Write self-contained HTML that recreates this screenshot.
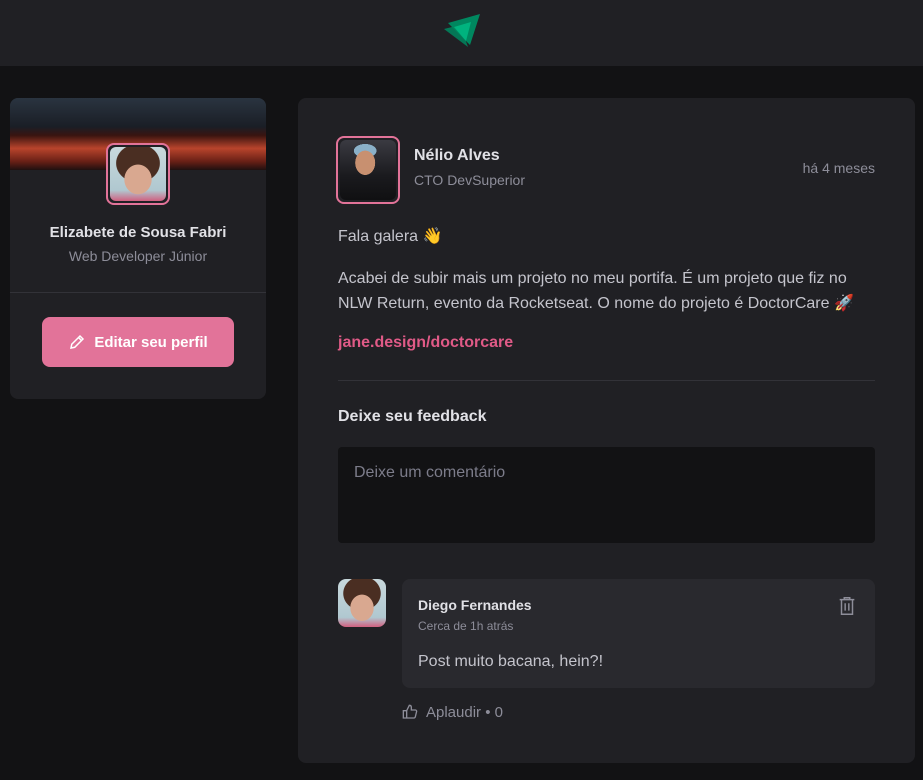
<!DOCTYPE html>
<html><head><meta charset="utf-8"><style>
*{margin:0;padding:0;box-sizing:border-box}
body{width:923px;height:780px;background:#121214;font-family:"Liberation Sans",sans-serif;color:#e1e1e6;overflow:hidden;position:relative}
.hdr{position:absolute;left:0;top:0;width:923px;height:66px;background:#202024}
.side{position:absolute;left:10px;top:98px;width:256px;height:301px;background:#202024;border-radius:8px;overflow:hidden}
.cover{height:72px;background:linear-gradient(180deg,#2a3440 0%,#1a1e26 40%,#3a1410 52%,#b8442c 70%,#6a2016 88%,#201010 100%)}
.av{position:absolute;border:2px solid #e27399;border-radius:8px;background:#202024;padding:2px}
.av div{width:100%;height:100%;border-radius:6px}
.face{background:radial-gradient(ellipse 40% 45% at 50% 60%,#d9a890 0 60%,rgba(0,0,0,0) 62%),radial-gradient(ellipse 55% 50% at 50% 30%,#4a2e22 0 70%,rgba(0,0,0,0) 72%),linear-gradient(180deg,#c8d8dc 0%,#b0c8d0 80%,#d06080 100%)}
.man{background:radial-gradient(ellipse 22% 25% at 45% 38%,#c89070 0 80%,rgba(0,0,0,0) 82%),radial-gradient(ellipse 25% 14% at 45% 18%,#8ab0c8 0 80%,rgba(0,0,0,0) 82%),linear-gradient(180deg,#3a3a42 0%,#1a1a1e 60%,#101012 100%)}
.post{position:absolute;left:298px;top:98px;width:617px;height:665px;background:#202024;border-radius:8px}
.t{position:absolute;white-space:nowrap}
</style></head><body>
<div class="hdr">
<svg style="position:absolute;left:444px;top:13px" width="38" height="34" viewBox="0 0 38 34"><polygon points="4,10 36,1 26,32" fill="#00875f"/><polygon points="0,16 16,12 24,34" fill="#00875f" opacity=".85"/><polygon points="10,14 27,9 22,28" fill="#00b37e"/></svg>
</div>
<div class="side"><div class="cover"></div>
<div class="av" style="left:96px;top:45px;width:64px;height:62px"><div class="face"></div></div>
<div class="t" style="left:0;width:256px;text-align:center;top:126px;font-weight:bold;font-size:15px;color:#e1e1e6">Elizabete de Sousa Fabri</div>
<div class="t" style="left:0;width:256px;text-align:center;top:150px;font-size:14px;color:#8d8d99">Web Developer Júnior</div>
<div style="position:absolute;left:0;top:194px;width:256px;height:1px;background:#323238"></div>
<div style="position:absolute;left:32px;top:219px;width:192px;height:50px;background:#e27399;border-radius:8px;color:#fff;font-weight:bold;font-size:15px;display:flex;align-items:center;justify-content:center;gap:8px">
<svg width="18" height="18" viewBox="0 0 24 24" fill="none" stroke="#fff" stroke-width="2"><path d="M4 20l1-5L16 4l4 4L9 19z M14 6l4 4"/></svg>Editar seu perfil</div>
</div>
<div class="post">
<div class="av" style="left:38px;top:38px;width:64px;height:68px"><div class="man"></div></div>
<div class="t" style="left:116px;top:49px;font-weight:bold;font-size:16px">Nélio Alves</div>
<div class="t" style="left:116px;top:74px;font-size:14px;color:#8d8d99">CTO DevSuperior</div>
<div class="t" style="right:40px;top:62px;font-size:14px;color:#8d8d99">há 4 meses</div>
<div class="t" style="left:40px;top:128px;font-size:16px;color:#c4c4cc">Fala galera 👋</div>
<div class="t" style="left:40px;top:168px;font-size:16px;line-height:25px;color:#c4c4cc">Acabei de subir mais um projeto no meu portifa. É um projeto que fiz no<br>NLW Return, evento da Rocketseat. O nome do projeto é DoctorCare 🚀</div>
<div class="t" style="left:40px;top:236px;font-size:16px;font-weight:bold;color:#e05a87">jane.design/doctorcare</div>
<div style="position:absolute;left:40px;top:282px;width:537px;height:1px;background:#323238"></div>
<div class="t" style="left:40px;top:310px;font-size:16px;font-weight:bold">Deixe seu feedback</div>
<div style="position:absolute;left:40px;top:349px;width:537px;height:96px;background:#121214;border-radius:4px"></div>
<div class="t" style="left:56px;top:366px;font-size:16px;color:#7c7c8a">Deixe um comentário</div>
<div style="position:absolute;left:40px;top:481px;width:48px;height:48px;border-radius:8px" class="face"></div>
<div style="position:absolute;left:104px;top:481px;width:473px;height:109px;background:#29292e;border-radius:8px"></div>
<div class="t" style="left:120px;top:499px;font-size:14px;font-weight:bold">Diego Fernandes</div>
<div class="t" style="left:120px;top:521px;font-size:12px;color:#8d8d99">Cerca de 1h atrás</div>
<svg style="position:absolute;left:538px;top:497px" width="22" height="22" viewBox="0 0 24 24" fill="none" stroke="#8d8d99" stroke-width="1.6"><path d="M4 5h16M9 5V3h6v2M6 5v16h12V5M10 9v8M14 9v8"/></svg>
<div class="t" style="left:120px;top:555px;font-size:16px;color:#c4c4cc">Post muito bacana, hein?!</div>
<svg style="position:absolute;left:104px;top:606px" width="16" height="16" viewBox="0 0 24 24" fill="none" stroke="#8d8d99" stroke-width="2"><path d="M2 10h5v11H2z M7 10l4-8c2 0 3 1 3 3v4h6c1 0 2 1 2 2l-2 8c0 1-1 2-2 2H7"/></svg>
<div class="t" style="left:128px;top:606px;font-size:15px;color:#8d8d99">Aplaudir • 0</div>
</div>
</body></html>
